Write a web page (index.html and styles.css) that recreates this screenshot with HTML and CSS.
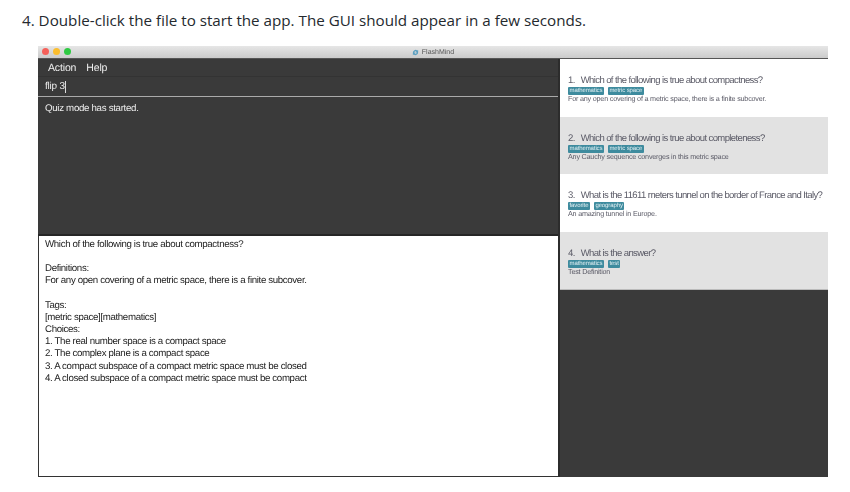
FILE: index.html
```html
<!DOCTYPE html>
<html lang="en">
<head>
<meta charset="utf-8">
<title>FlashMind</title>
<link rel="stylesheet" href="styles.css">
</head>
<body>
<p class="step">4. Double-click the file to start the app. The GUI should appear in a few seconds.</p>
<div class="window">
  <div class="titlebar">
    <div class="lights"><span class="light red"></span><span class="light yellow"></span><span class="light green"></span></div>
    <div class="title">
      <svg class="appicon" viewBox="0 0 8 8" width="7" height="7"><path d="M1 4a3 3 0 0 1 5-2.2L7 1v3H4l1-1a1.6 1.6 0 0 0-2.6 1zM7 4a3 3 0 0 1-5 2.2L1 7V4h3L3 5a1.6 1.6 0 0 0 2.6-1z" fill="#5a9fc0"/></svg>
      <span>FlashMind</span>
    </div>
  </div>
  <div class="body">
    <div class="left">
      <div class="menu"><span>Action</span><span>Help</span></div>
      <div class="command"><span>flip 3</span><span class="caret"></span></div>
      <div class="result">Quiz mode has started.</div>
      <div class="detail">
        <p>Which of the following is true about compactness?</p>
        <p class="blank"></p>
        <p>Definitions:</p>
        <p>For any open covering of a metric space, there is a finite subcover.</p>
        <p class="blank"></p>
        <p>Tags:</p>
        <p>[metric space][mathematics]</p>
        <p>Choices:</p>
        <p>1. The real number space is a compact space</p>
        <p>2. The complex plane is a compact space</p>
        <p>3. A compact subspace of a compact metric space must be closed</p>
        <p>4. A closed subspace of a compact metric space must be compact</p>
      </div>
    </div>
    <div class="right">
      <div class="card">
        <div class="q"><span class="num">1.</span>Which of the following is true about compactness?</div>
        <div class="tags"><span class="tag">mathematics</span><span class="tag">metric space</span></div>
        <div class="def">For any open covering of a metric space, there is a finite subcover.</div>
      </div>
      <div class="card alt">
        <div class="q"><span class="num">2.</span>Which of the following is true about completeness?</div>
        <div class="tags"><span class="tag">mathematics</span><span class="tag">metric space</span></div>
        <div class="def">Any Cauchy sequence converges in this metric space</div>
      </div>
      <div class="card">
        <div class="q"><span class="num">3.</span>What is the 11611 meters tunnel on the border of France and Italy?</div>
        <div class="tags"><span class="tag">favorite</span><span class="tag">geography</span></div>
        <div class="def">An amazing tunnel in Europe.</div>
      </div>
      <div class="card alt last">
        <div class="q"><span class="num">4.</span>What is the answer?</div>
        <div class="tags"><span class="tag">mathematics</span><span class="tag">test</span></div>
        <div class="def">Test Definition</div>
      </div>
    </div>
  </div>
</div>
</body>
</html>
```
FILE: styles.css
```css
* { box-sizing: border-box; }
html, body { margin: 0; padding: 0; }
body { background: #fff; width: 850px; height: 492px; overflow: hidden; font-family: "Liberation Sans", sans-serif; }
p { margin: 0; }
.step {
  font-family: "Open Sans", sans-serif;
  font-size: 15.2px;
  line-height: 20px;
  color: #24292e;
  padding: 10px 0 0 22px;
  height: 46px;
}
.window {
  margin-left: 38px;
  width: 790px;
  height: 431px;
  display: flex;
  flex-direction: column;
  text-rendering: geometricPrecision;
  filter: blur(0.3px);
}
.titlebar {
  height: 13px;
  flex: none;
  background: linear-gradient(#e6e6e6, #cbcbcb);
  border-bottom: 1px solid #555;
  position: relative;
  display: flex;
  align-items: center;
  justify-content: center;
}
.lights { position: absolute; left: 4px; top: 2px; display: flex; gap: 4px; }
.light { width: 7px; height: 7px; border-radius: 50%; }
.red { background: #f5605a; }
.yellow { background: #fbbd2e; }
.green { background: #2ec942; }
.title { display: flex; align-items: center; gap: 3px; font-size: 7px; color: #555; }
.appicon { display: block; }
.body { flex: 1; display: flex; min-height: 0; background: #3a3a3a; }
.left { width: 522px; flex: none; display: flex; flex-direction: column; border-right: 2px solid #2c2c2c; }
.menu {
  height: 18px;
  flex: none;
  display: flex;
  gap: 10px;
  padding: 0 0 0 10px;
  align-items: center;
  color: #eee;
  font-size: 10.5px;
  letter-spacing: -0.15px;
  border-bottom: 1px solid #333;
}
.command {
  height: 20px;
  flex: none;
  display: flex;
  align-items: center;
  padding: 0 0 0 7px;
  color: #eee;
  font-size: 10px;
  letter-spacing: -0.2px;
  border-bottom: 1px solid #aaa;
}
.caret { width: 1px; height: 12px; background: #ddd; margin-left: 0; }
.result {
  height: 139px;
  flex: none;
  padding: 5px 0 0 7px;
  color: #eee;
  font-size: 9.7px;
  letter-spacing: -0.3px;
  line-height: 13px;
  border-bottom: 2px solid #262626;
}
.detail {
  flex: 1;
  background: #fff;
  border-left: 1px solid #333;
  border-bottom: 1px solid #333;
  padding: 3px 0 0 6px;
  color: #222;
  font-size: 9.7px;
  letter-spacing: -0.35px;
  line-height: 12.2px;
}
.blank { height: 12px; }
.right { flex: 1; min-width: 0; display: flex; flex-direction: column; align-items: stretch; }
.card {
  height: 57.7px;
  flex: none;
  background: #fff;
  padding: 16px 0 0 8px;
  color: #5a5a66;
}
.card.alt { background: #e2e2e2; }
.card.last { border-bottom: 1px solid #bbb; }
.q { font-size: 9.5px; letter-spacing: -0.6px; line-height: 11px; white-space: nowrap; }
.num { margin-right: 6px; }
.tags { display: flex; gap: 4px; margin-top: 1px; height: 8px; }
.tag { background: #3e8b9e; color: #e2f0f3; font-size: 6px; letter-spacing: -0.1px; line-height: 8px; padding: 0 1.5px; border-radius: 1px; }
.def { font-size: 7.2px; letter-spacing: -0.2px; line-height: 8px; white-space: nowrap; }
```
